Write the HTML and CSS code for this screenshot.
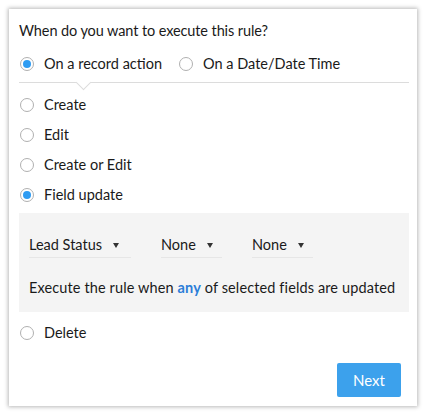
FILE: index.html
```html
<!DOCTYPE html>
<html>
<head>
<meta charset="utf-8">
<link rel="stylesheet" href="styles.css">
</head>
<body>
<div class="card">
  <div class="title">When do you want to execute this rule?</div>
  <div class="tabs">
    <label class="opt"><span class="radio on"></span>On a record action</label>
    <label class="opt tab2"><span class="radio"></span>On a Date/Date Time</label>
  </div>
  <div class="divider"><span class="notch"></span></div>
  <div class="list">
    <label class="opt row"><span class="radio"></span>Create</label>
    <label class="opt row"><span class="radio"></span>Edit</label>
    <label class="opt row"><span class="radio"></span>Create or Edit</label>
    <label class="opt row"><span class="radio on"></span>Field update</label>
  </div>
  <div class="panel">
    <div class="selects">
      <div class="sel w1"><span>Lead Status</span><span class="caret"></span></div>
      <div class="sel w2"><span>None</span><span class="caret"></span></div>
      <div class="sel w2"><span>None</span><span class="caret"></span></div>
    </div>
    <div class="note">Execute the rule when <span class="any">any</span> of selected fields are updated</div>
  </div>
  <label class="opt row del"><span class="radio"></span>Delete</label>
  <div class="actions"><button class="next">Next</button></div>
</div>
</body>
</html>
```
FILE: styles.css
```css
html, body {
  margin: 0;
  padding: 0;
  background: #fff;
}
body {
  padding: 9px;
  font-family: Lato, "Open Sans", sans-serif;
  font-size: 14.5px;
  color: #1a1a1a;
}
.card {
  width: 408px;
  height: 397px;
  box-sizing: border-box;
  background: #fff;
  box-shadow: 0 0 4px 1px rgba(0,0,0,0.28);
  padding: 12px 8px 9px 10px;
  display: flex;
  flex-direction: column;
}
.title {
  line-height: 20px;
  height: 20px;
  letter-spacing: -0.1px;
}
.tabs {
  margin-top: 13px;
  display: flex;
  height: 20px;
}
.opt {
  display: flex;
  align-items: center;
  line-height: 20px;
  white-space: nowrap;
}
.radio {
  width: 14px;
  height: 14px;
  box-sizing: border-box;
  border: 1px solid #b0b0b0;
  border-radius: 50%;
  margin: 0 10px 0 1px;
  display: flex;
  align-items: center;
  justify-content: center;
  background: #fff;
}
.radio.on::after {
  content: "";
  width: 8px;
  height: 8px;
  border-radius: 50%;
  background: #2f9cf2;
}
.tab2 {
  margin-left: 16px;
}
.divider {
  margin-top: 8px;
  height: 1px;
  background: #dcdcdc;
  position: relative;
}
.notch {
  position: absolute;
  left: 59px;
  top: -5px;
  width: 10px;
  height: 10px;
  background: #fff;
  border-right: 1px solid #dcdcdc;
  border-bottom: 1px solid #dcdcdc;
  transform: rotate(45deg);
}
.list {
  margin-top: 7px;
  display: flex;
  flex-direction: column;
}
.row {
  height: 30px;
}
.panel {
  margin-top: 3px;
  height: 99px;
  background: #f4f4f4;
  padding: 0 10px;
  box-sizing: border-box;
}
.selects {
  display: flex;
  padding-top: 19px;
}
.sel {
  display: flex;
  align-items: center;
  height: 25px;
  border-bottom: 1px solid #e6e6e6;
  margin-right: 30px;
}
.w1 { width: 102px; }
.w2 { width: 61px; }
.caret {
  width: 0;
  height: 0;
  border-left: 3.5px solid transparent;
  border-right: 3.5px solid transparent;
  border-top: 5px solid #333;
  margin-left: 11px;
  margin-top: 2px;
}
.note {
  margin-top: 20px;
  line-height: 20px;
  white-space: nowrap;
  letter-spacing: 0.12px;
}
.any {
  color: #2b7ed8;
  font-weight: 700;
}
.del {
  margin-top: 6px;
}
.actions {
  margin-top: auto;
  display: flex;
  justify-content: flex-end;
  padding-right: 8px;
}
.next {
  width: 64px;
  height: 34px;
  border: none;
  border-radius: 2px;
  background: #3ca1ec;
  color: #fff;
  font-family: Lato, "Open Sans", sans-serif;
  font-size: 15px;
  padding: 0;
}
```
